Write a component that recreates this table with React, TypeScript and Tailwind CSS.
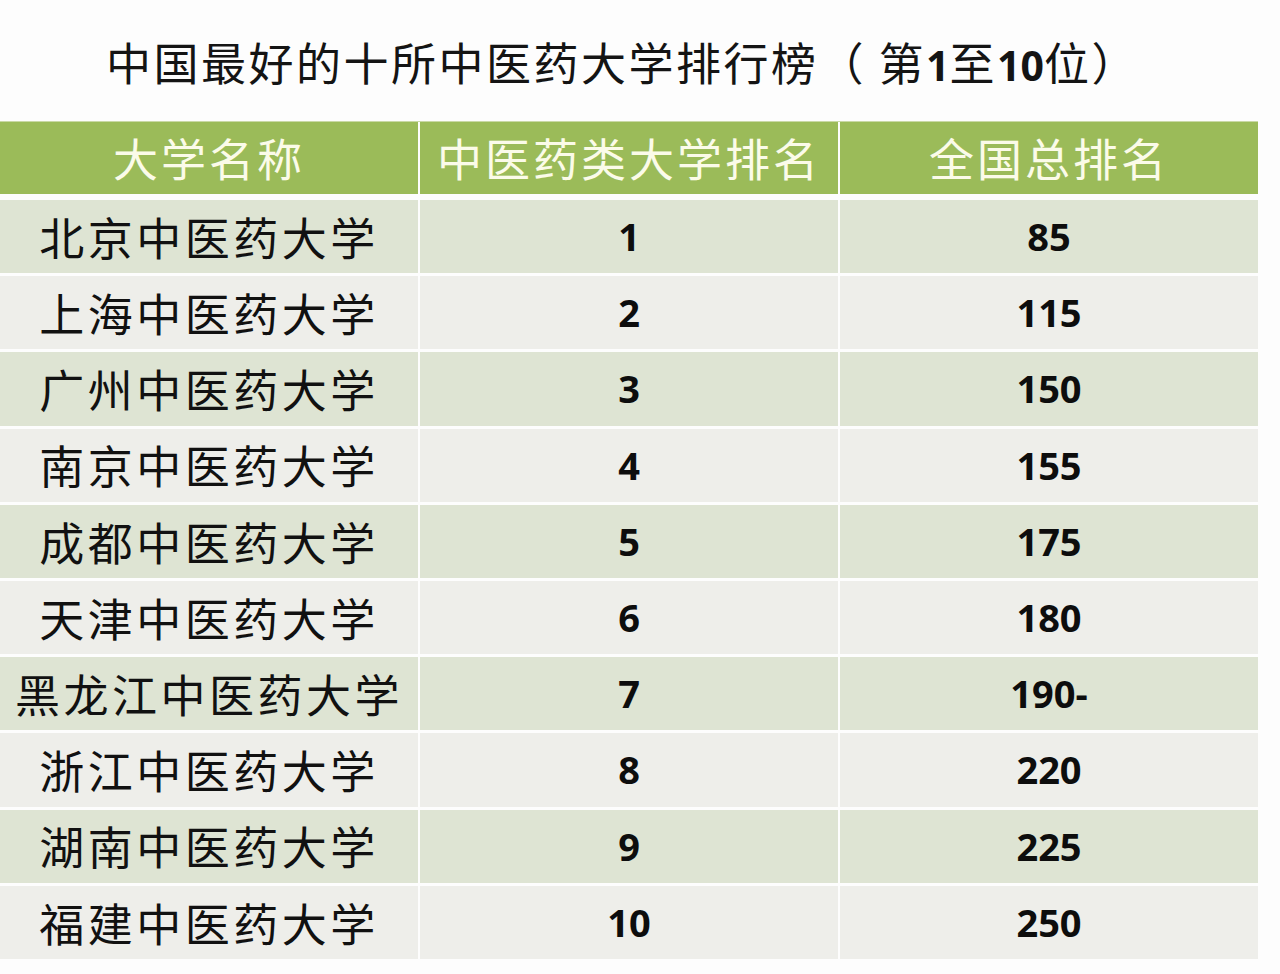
import React from 'react';

interface Row {
  name: string;
  tcm: string;
  overall: string;
}

const rows: Row[] = [
  { name: '北京中医药大学', tcm: '1', overall: '85' },
  { name: '上海中医药大学', tcm: '2', overall: '115' },
  { name: '广州中医药大学', tcm: '3', overall: '150' },
  { name: '南京中医药大学', tcm: '4', overall: '155' },
  { name: '成都中医药大学', tcm: '5', overall: '175' },
  { name: '天津中医药大学', tcm: '6', overall: '180' },
  { name: '黑龙江中医药大学', tcm: '7', overall: '190-' },
  { name: '浙江中医药大学', tcm: '8', overall: '220' },
  { name: '湖南中医药大学', tcm: '9', overall: '225' },
  { name: '福建中医药大学', tcm: '10', overall: '250' },
];

const cjk = "font-['Noto_Sans_CJK_SC',sans-serif]";
const num = "font-['Open_Sans','Noto_Sans_CJK_SC',sans-serif] font-bold";

const App: React.FC = () => {
  return (
    <div className="w-[1280px] h-[974px] bg-[#fdfdfd] overflow-hidden">
      {/* Title */}
      <div className="h-[121px] pt-[6px] pl-[106px] flex items-center">
        <h1 className={`${cjk} text-[45px] leading-[56px] font-normal text-[#141414] tracking-[2.5px]`}>
          中国最好的十所中医药大学排行榜（ 第<span className={`${num} text-[41px] tracking-normal`}>1</span>至
          <span className={`${num} text-[41px] tracking-normal`}>10</span>位）
        </h1>
      </div>

      {/* Table */}
      <div className="w-[1258px] flex flex-col">
        <div className="grid grid-cols-3 gap-x-[2px] h-[73px] border-t border-[#c9d9a6]">
          {['大学名称', '中医药类大学排名', '全国总排名'].map((h) => (
            <div
              key={h}
              className={`bg-[#9bbb59] flex items-center justify-center ${cjk} text-[45px] tracking-[3px] text-[#fbfbe9]`}
            >
              {h}
            </div>
          ))}
        </div>

        <div className="mt-[6px] flex flex-col gap-y-[3px]">
          {rows.map((r, i) => {
            const bg = i % 2 === 0 ? 'bg-[#dee4d3]' : 'bg-[#eeeeea]';
            return (
              <div key={r.name} className="grid grid-cols-3 gap-x-[2px] h-[73.2px]">
                <div className={`${bg} flex items-center justify-center ${cjk} text-[45px] tracking-[3.5px] text-[#111]`}>
                  {r.name}
                </div>
                <div className={`${bg} flex items-center justify-center ${num} text-[38px] text-[#0d0d0d]`}>
                  {r.tcm}
                </div>
                <div className={`${bg} flex items-center justify-center ${num} text-[38px] text-[#0d0d0d]`}>
                  {r.overall}
                </div>
              </div>
            );
          })}
        </div>
      </div>
    </div>
  );
};

export default App;
